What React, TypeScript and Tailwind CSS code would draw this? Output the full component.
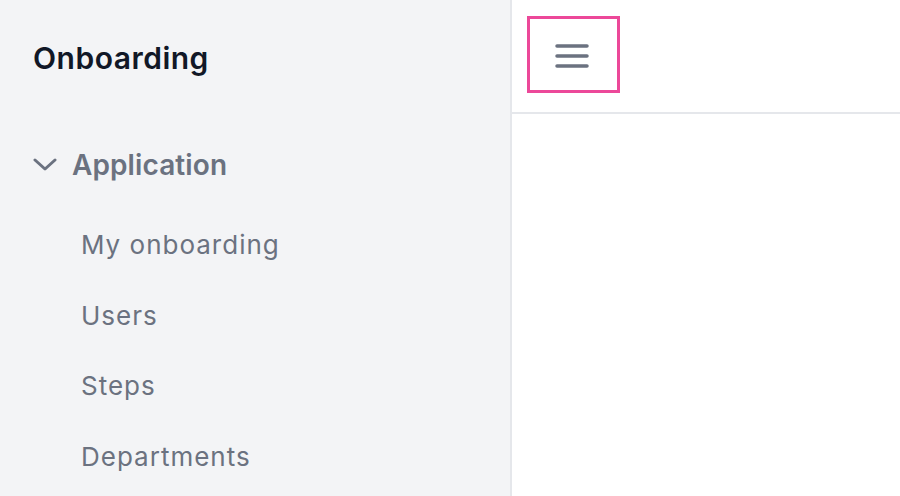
import React from "react";

function Chevron() {
  return (
    <svg width="24" height="14" viewBox="0 0 24 14" fill="none" className="shrink-0">
      <path d="M2 2 L12 11 L22 2" stroke="#6b7280" strokeWidth="3" strokeLinecap="round" strokeLinejoin="round" />
    </svg>
  );
}

function Hamburger() {
  return (
    <svg width="34" height="26" viewBox="0 0 34 26" fill="none">
      <path d="M2 3 H32 M2 13 H32 M2 23 H32" stroke="#6b7280" strokeWidth="3.5" strokeLinecap="round" />
    </svg>
  );
}

export default function App() {
  const items = ["My onboarding", "Users", "Steps", "Departments"];
  return (
    <div className="flex h-[496px] w-[900px] overflow-hidden bg-white" style={{ fontFamily: "Inter, 'Noto Sans', sans-serif" }}>
      <aside className="flex w-[512px] shrink-0 flex-col border-r-2 border-[#e5e7eb] bg-[#f3f4f6]">
        <div className="flex h-[114px] items-center pl-[33px] pt-[2px]">
          <span className="text-[30px] font-semibold leading-none tracking-[0.5px] text-[#111827]">Onboarding</span>
        </div>
        <div className="flex h-[96px] items-center gap-[15px] pl-[33px] pt-[6px]">
          <Chevron />
          <span className="text-[28px] font-semibold leading-none tracking-[0.1px] text-[#6b7280]">Application</span>
        </div>
        <div className="flex flex-col">
          {items.map((t) => (
            <div key={t} className="flex h-[70.5px] items-center pl-[81px] text-[26px] leading-none tracking-[1px] text-[#6b7280]">
              {t}
            </div>
          ))}
        </div>
      </aside>
      <main className="flex flex-1 flex-col">
        <header className="flex h-[114px] items-start border-b-2 border-[#e5e7eb] pl-[15px] pt-[16px]">
          <button className="flex h-[77px] w-[93px] items-center justify-center border-[3px] border-[#ec4899] pr-[4px] pt-[2px]">
            <Hamburger />
          </button>
        </header>
      </main>
    </div>
  );
}
